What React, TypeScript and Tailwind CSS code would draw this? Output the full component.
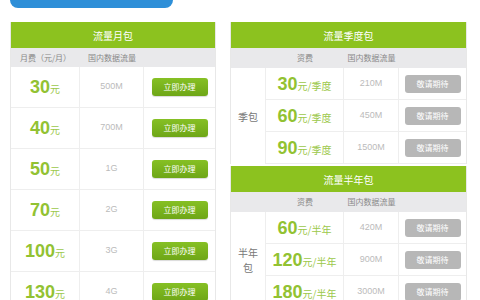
const cjk = { fontFamily: '"Noto Sans CJK SC", "Noto Sans", sans-serif' };
const num = { fontFamily: '"Liberation Sans", Arial, sans-serif' };

const monthly = [
  { price: "30", data: "500M" },
  { price: "40", data: "700M" },
  { price: "50", data: "1G" },
  { price: "70", data: "2G" },
  { price: "100", data: "3G" },
  { price: "130", data: "4G" },
];

const quarter = [
  { price: "30", data: "210M" },
  { price: "60", data: "450M" },
  { price: "90", data: "1500M" },
];

const half = [
  { price: "60", data: "420M" },
  { price: "120", data: "900M" },
  { price: "180", data: "3000M" },
];

function Header({ title }: { title: string }) {
  return (
    <div
      className="h-[26px] bg-[#8cc21f] text-white text-[10px] flex items-center justify-center"
      style={cjk}
    >
      {title}
    </div>
  );
}

function Price({ value, unit }: { value: string; unit: string }) {
  return (
    <span className="text-[#92c232] flex items-baseline">
      <span className="text-[18px] font-bold leading-none" style={num}>
        {value}
      </span>
      <span className="text-[10px] leading-none text-[#9cc84a]" style={cjk}>
        {unit}
      </span>
    </span>
  );
}

function MonthTable() {
  return (
    <div className="w-[206px] border-x border-[#e8e8e8] shrink-0">
      <Header title="流量月包" />
      <div
        className="h-[19px] bg-[#e9e9eb] flex text-[8px] text-[#888] items-center"
        style={cjk}
      >
        <div className="w-[69px] text-center">月费（元/月）</div>
        <div className="w-[64px] text-center">国内数据流量</div>
      </div>
      {monthly.map((r) => (
        <div key={r.price} className="h-[41px] flex border-b border-[#eeeeee]">
          <div className="w-[69px] flex items-center justify-center border-r border-[#eeeeee]">
            <Price value={r.price} unit="元" />
          </div>
          <div
            className="w-[64px] flex items-center justify-center border-r border-[#eeeeee] text-[9px] text-[#bbbbbb]"
            style={num}
          >
            {r.data}
          </div>
          <div className="flex-1 flex items-center justify-center">
            <div
              className="w-[56px] h-[18px] rounded-[3px] bg-gradient-to-b from-[#86c024] to-[#6ea617] text-white text-[8px] flex items-center justify-center shadow-[0_1px_1px_rgba(0,0,0,0.15)]"
              style={cjk}
            >
              立即办理
            </div>
          </div>
        </div>
      ))}
    </div>
  );
}

function SideTable({
  title,
  label,
  unit,
  rows,
}: {
  title: string;
  label: React.ReactNode;
  unit: string;
  rows: { price: string; data: string }[];
}) {
  return (
    <div className="w-[237px] border-x border-[#e8e8e8]">
      <Header title={title} />
      <div
        className="h-[20px] bg-[#e9e9eb] flex text-[8px] text-[#888] items-center"
        style={cjk}
      >
        <div className="w-[35px]" />
        <div className="w-[78px] text-center">资费</div>
        <div className="w-[55px] text-center">国内数据流量</div>
      </div>
      <div className="flex">
        <div
          className="w-[35px] flex items-center justify-center border-r border-[#eeeeee] text-[10px] text-[#777] text-center leading-[15px]"
          style={cjk}
        >
          {label}
        </div>
        <div className="flex-1">
          {rows.map((r) => (
            <div key={r.price} className="h-[32px] flex border-b border-[#eeeeee]">
              <div className="w-[78px] flex items-center justify-center border-r border-[#eeeeee]">
                <Price value={r.price} unit={unit} />
              </div>
              <div
                className="w-[55px] flex items-center justify-center border-r border-[#eeeeee] text-[9px] text-[#bbbbbb]"
                style={num}
              >
                {r.data}
              </div>
              <div className="flex-1 flex items-center justify-center">
                <div
                  className="w-[56px] h-[18px] rounded-[3px] bg-[#b7b7b7] text-white text-[8px] flex items-center justify-center"
                  style={cjk}
                >
                  敬请期待
                </div>
              </div>
            </div>
          ))}
        </div>
      </div>
    </div>
  );
}

export default function App() {
  return (
    <div className="w-[480px] h-[300px] overflow-hidden bg-white pl-[10px]">
      <div className="w-[163px] h-[8px] bg-[#2e8fd8] rounded-b-[10px]" />
      <div className="flex gap-[14px] mt-[14px]">
        <MonthTable />
        <div className="flex flex-col gap-[2px]">
          <SideTable title="流量季度包" label="季包" unit="元/季度" rows={quarter} />
          <SideTable
            title="流量半年包"
            label={
              <span>
                半年
                <br />包
              </span>
            }
            unit="元/半年"
            rows={half}
          />
        </div>
      </div>
    </div>
  );
}
